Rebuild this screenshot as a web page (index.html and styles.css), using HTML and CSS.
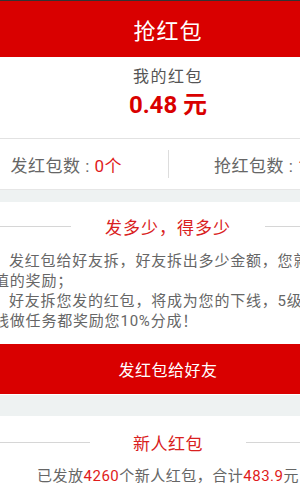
FILE: index.html
```html
<!DOCTYPE html>
<html lang="zh-CN">
<head>
  <meta charset="UTF-8">
  <title>抢红包</title>
  <link rel="stylesheet" href="styles.css">
</head>
<body>
  <div class="page">

    <div class="header">抢红包</div>

    <div class="wallet">
      <div class="wallet-label">我的红包</div>
      <div class="wallet-amount">0.48 元</div>
    </div>

    <div class="stats">
      <div class="stat">发红包数 : <span class="red">0个</span></div>
      <div class="stat-divider"></div>
      <div class="stat">抢红包数 : <span class="red">1个</span></div>
    </div>

    <div class="section">
      <div class="section-title">
        <span class="line"></span>
        <span class="title-text">发多少，得多少</span>
        <span class="line"></span>
      </div>
      <p class="intro">发红包给好友拆，好友拆出多少金额，您就获得等值的奖励；</p>
      <p class="intro">好友拆您发的红包，将成为您的下线，5级内的下线做任务都奖励您10%分成！</p>
      <button class="send-btn">发红包给好友</button>
    </div>

    <div class="section section-new">
      <div class="section-title">
        <span class="line"></span>
        <span class="title-text title-wide">新人红包</span>
        <span class="line"></span>
      </div>
      <div class="new-info">已发放<span class="red">4260</span>个新人红包，合计<span class="red">483.9</span>元</div>
    </div>

  </div>
</body>
</html>
```

FILE: styles.css
```css
body {
  margin: 0;
  overflow: hidden;
  background-color: #eef2f2;
  font-family: Roboto, "Noto Sans CJK SC", sans-serif;
  color: #666;
}

.page {
  width: 406px;
  margin-left: -35px;
}

.red {
  color: #e01b1b;
}

.header {
  height: 56px;
  border-top: 1px solid #333;
  background-color: #d90000;
  color: #fff;
  font-size: 22px;
  letter-spacing: 1px;
  display: flex;
  align-items: center;
  justify-content: center;
}

.wallet {
  background-color: #fff;
  text-align: center;
  padding: 10px 0 18px;
  border-bottom: 1px solid #e2e2e2;
}

.wallet-label {
  font-size: 16px;
  line-height: 20px;
  letter-spacing: 1.5px;
  color: #555;
}

.wallet-amount {
  margin-top: 3px;
  font-size: 24px;
  line-height: 30px;
  font-weight: bold;
  color: #d90000;
}

.stats {
  height: 50px;
  background-color: #fff;
  display: flex;
  align-items: center;
  border-bottom: 1px solid #e6e6e6;
}

.stat {
  flex: 1;
  text-align: center;
  font-size: 17px;
  letter-spacing: 0.5px;
  color: #666;
}

.stat-divider {
  width: 1px;
  height: 28px;
  background-color: #ddd;
}

.section {
  margin-top: 12px;
  background-color: #fff;
  padding: 14px 0 1px;
}

.section-new {
  margin-top: 21px;
  padding-top: 16px;
  padding-bottom: 20px;
}

.section-title {
  display: flex;
  align-items: center;
  height: 20px;
}

.line {
  flex: 1;
  height: 1px;
  background-color: #d6d6d6;
}

.title-text {
  padding: 0 34px;
  font-size: 17px;
  letter-spacing: 1px;
  color: #d92020;
}

.title-wide {
  padding: 0 43px;
  letter-spacing: 0.5px;
}

.intro {
  margin: 0;
  padding: 0 7px 0 29px;
  font-size: 15px;
  line-height: 20px;
  letter-spacing: 0.8px;
  text-indent: 1em;
  color: #666;
}

.intro:first-of-type {
  margin-top: 15px;
}

.send-btn {
  display: block;
  width: 100%;
  height: 50px;
  margin-top: 13px;
  border: none;
  background-color: #d90000;
  color: #fff;
  font-family: inherit;
  font-size: 16px;
  letter-spacing: 0.5px;
}

.new-info {
  margin-top: 14px;
  text-align: center;
  font-size: 15px;
  line-height: 20px;
  letter-spacing: 0.5px;
  color: #666;
}
```
